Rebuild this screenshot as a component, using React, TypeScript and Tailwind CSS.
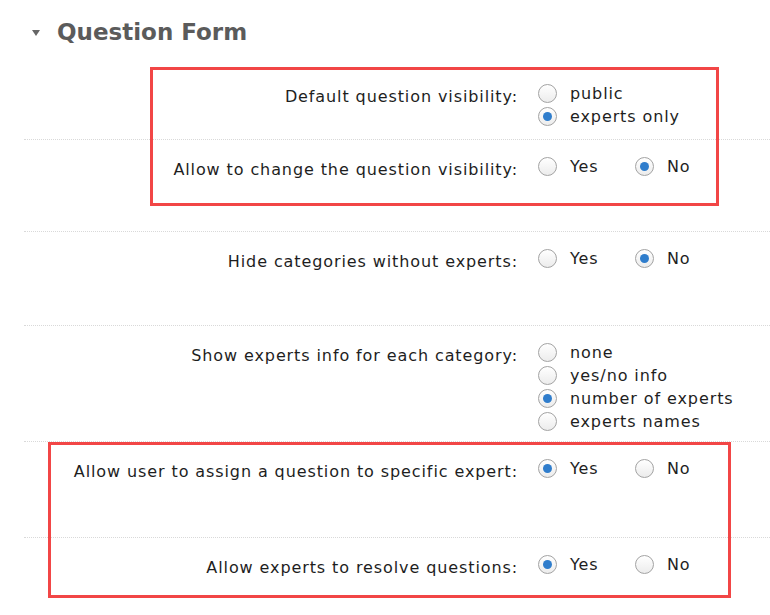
import React from "react";

type Opt = { label: string; checked?: boolean };

function Radio({ checked }: { checked?: boolean }) {
  return (
    <span className="flex h-[19px] w-[19px] shrink-0 items-center justify-center rounded-full border border-[#a3a3a3] bg-gradient-to-b from-white to-[#ececec]">
      {checked && <span className="h-[9px] w-[9px] rounded-full bg-[#2f7dcc]" />}
    </span>
  );
}

function Row({
  label,
  options,
  inline,
  height,
  first,
}: {
  label: string;
  options: Opt[];
  inline?: boolean;
  height: string;
  first?: boolean;
}) {
  return (
    <div
      className={`flex ${height} ${first ? "" : "border-t border-dotted border-[#d9d9d9]"} pt-[15px]`}
    >
      <div className="w-[494px] shrink-0 pt-[3px] text-right">{label}</div>
      <div className={`ml-[20px] ${inline ? "flex" : "flex flex-col"}`}>
        {options.map((o) => (
          <label
            key={o.label}
            className={`flex h-[23px] items-center gap-[13px] ${inline ? "w-[97px]" : ""}`}
          >
            <Radio checked={o.checked} />
            <span>{o.label}</span>
          </label>
        ))}
      </div>
    </div>
  );
}

export default function App() {
  return (
    <div
      className="relative h-[615px] w-[770px] overflow-hidden bg-white text-[16px] tracking-[0.9px] text-[#1e1e1e]"
      style={{ fontFamily: '"DejaVu Sans", Verdana, sans-serif' }}
    >
      {/* Header */}
      <div className="flex h-[67px] items-start pt-[17px] pl-[32px]">
        <span className="mt-[13px] h-0 w-0 border-x-[4px] border-t-[6px] border-x-transparent border-t-[#666]" />
        <h2 className="ml-[17px] text-[23px] font-bold leading-[30px] tracking-normal text-[#5b5b5b]">
          Question Form
        </h2>
      </div>

      <div className="ml-[24px]">
        <Row
          first
          height="h-[72px]"
          label="Default question visibility:"
          options={[{ label: "public" }, { label: "experts only", checked: true }]}
        />
        <Row
          height="h-[92px]"
          inline
          label="Allow to change the question visibility:"
          options={[{ label: "Yes" }, { label: "No", checked: true }]}
        />
        <Row
          height="h-[94px]"
          inline
          label="Hide categories without experts:"
          options={[{ label: "Yes" }, { label: "No", checked: true }]}
        />
        <Row
          height="h-[116px]"
          label="Show experts info for each category:"
          options={[
            { label: "none" },
            { label: "yes/no info" },
            { label: "number of experts", checked: true },
            { label: "experts names" },
          ]}
        />
        <Row
          height="h-[96px]"
          inline
          label="Allow user to assign a question to specific expert:"
          options={[{ label: "Yes", checked: true }, { label: "No" }]}
        />
        <Row
          height="h-[78px]"
          inline
          label="Allow experts to resolve questions:"
          options={[{ label: "Yes", checked: true }, { label: "No" }]}
        />
      </div>

      {/* highlight boxes */}
      <div className="pointer-events-none absolute left-[150px] top-[67px] h-[139px] w-[569px] border-[3px] border-[#f24646]" />
      <div className="pointer-events-none absolute left-[48px] top-[442px] h-[156px] w-[683px] border-[3px] border-[#f24646]" />
    </div>
  );
}
